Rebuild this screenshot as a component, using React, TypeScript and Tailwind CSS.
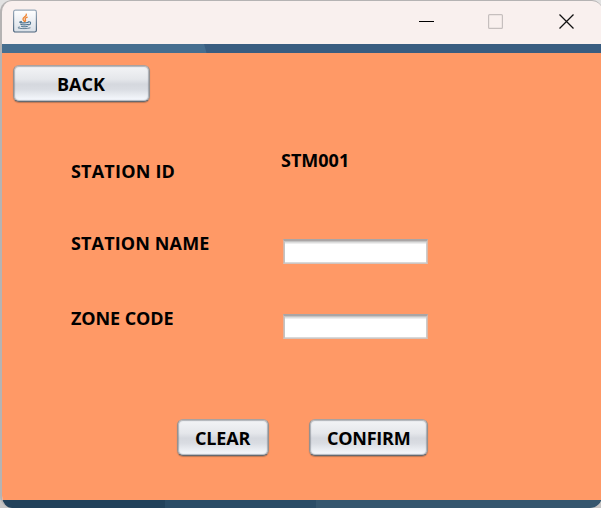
import React from "react";

const textStyle = "font-['Open_Sans','Noto_Sans',sans-serif] text-[18px] leading-[24px] font-bold text-black whitespace-nowrap";

function MetalButton({ label, size, spacing }: { label: string; size: string; spacing: string }) {
  return (
    <button
      className={`${size} ${textStyle} flex items-center rounded-[6px] border border-t-[#aaa19f] border-x-[#95908f] border-b-[#656970] bg-[linear-gradient(180deg,#f4f5f7_0%,#e5e7eb_38%,#d5d8de_52%,#d9dce2_65%,#f7faff_96%)] bg-origin-border shadow-[inset_0_0_1px_1px_rgba(110,115,125,0.5),0_1px_1px_rgba(90,70,60,0.4)]`}
    >
      <span className={spacing}>{label}</span>
    </button>
  );
}

function Field({ label }: { label: string }) {
  return (
    <input
      aria-label={label}
      className="block h-[25px] w-[145px] border border-t-2 border-t-[#aaa5a5] border-l-[#d9b5a5] border-r-[#d9b9aa] border-b-[#d0c4bf] bg-white shadow-[inset_0_1px_0_#c4c4c4,inset_1px_0_0_#c3c3c3,inset_-1px_0_0_#cccccc,inset_0_-1px_0_#d9d9d9,inset_0_2px_0_#dddddd,inset_0_3px_0_#eeeeee] outline-none"
    />
  );
}

function JavaIcon() {
  return (
    <svg className="h-6 w-6" viewBox="0 0 24 24" fill="none">
      <defs>
        <linearGradient id="tile" x1="0" y1="0" x2="0" y2="1">
          <stop stopColor="#ffffff" />
          <stop offset="1" stopColor="#d9dfe7" />
        </linearGradient>
        <linearGradient id="edge" x1="0" y1="0" x2="0" y2="1">
          <stop stopColor="#9aaaba" />
          <stop offset="1" stopColor="#4b647d" />
        </linearGradient>
      </defs>
      <rect x=".6" y="1.2" width="22.8" height="21.8" rx="1.8" fill="url(#tile)" stroke="url(#edge)" strokeWidth="1.2" />
      <g transform="translate(0 1)">
        <path d="M13.3 4.2c.8 2.2-3.6 2.8-3.3 5 .1.9 1.1 1.4 1.5 2.3M14.2 7.2c-2 .7-2.5 1.5-1.8 2.5.5.7.3 1.2-.5 2" stroke="#ef812c" strokeWidth="1.3" strokeLinecap="round" />
        <path d="M8.5 11.6c-2 .3-2.5.8-.5 1.1 2.3.3 5.2.2 7.4-.4M7.7 14.2c2.2.8 5.3.7 7.5 0M8.4 16.2c1.9.7 4.3.6 6 0M15.2 11.9c3.2-.8 3.1 2.6.4 3.1" stroke="#507590" strokeWidth="1.1" strokeLinecap="round" />
        <path d="M6.5 17c-2.1.4-2.1 1 0 1.3 3.2.5 7.7.4 10.6-.4" stroke="#668397" strokeWidth="1" strokeLinecap="round" />
      </g>
    </svg>
  );
}

export default function App() {
  return (
    <div className="h-[508px] w-[601px] overflow-hidden bg-[linear-gradient(180deg,#e2e2e2_0_50%,#c6c4c3_50%)]">
      <div className="flex h-[508px] w-[602px] flex-col overflow-hidden rounded-[12px] rounded-tr-[10px] border-t border-l-2 border-[#b5b3b3] bg-[#f9f0ee]">
        <header className="flex h-[43px] shrink-0 justify-between pt-2 pl-[11px]">
          <JavaIcon />
          <svg className="h-6 w-[183px]" viewBox="0 0 183 24" fill="none">
            <path d="M0 12.5h15" stroke="#000" />
            <rect x="69.6" y="5.6" width="13.8" height="13.8" rx="1" stroke="#c6bfbe" strokeWidth="1.2" />
            <path d="m140.5 5.5 14 14m0-14-14 14" stroke="#111" strokeWidth="1.3" />
          </svg>
        </header>
        <div className="h-[9px] shrink-0 bg-[linear-gradient(75deg,#466e8f_0_197px,#395d80_198px)]" />
        <main className="h-[447px] shrink-0 bg-[#ff9966] pt-3 pl-[11px]">
          <MetalButton label="BACK" size="h-[37px] w-[137px] pl-[43px]" spacing="tracking-[0px]" />
          <div className="mt-[46px] ml-[58px] grid w-fit grid-cols-[210px_150px]">
            <div className={`${textStyle} h-[81px] pt-[11px]`}><span className="tracking-[0.2px]">STATION ID</span></div>
            <div className={textStyle}><span className="tracking-[0px]">STM001</span></div>
            <div className={`${textStyle} h-[75px] pt-[2px]`}><span className="tracking-[0.13px]">STATION NAME</span></div>
            <div className="pt-[10px] pl-[2px]"><Field label="Station name" /></div>
            <div className={`${textStyle} pt-[2px]`}><span className="tracking-[-0.1px]">ZONE CODE</span></div>
            <div className="pt-[10px] pl-[2px]"><Field label="Zone code" /></div>
          </div>
          <div className="mt-[80px] ml-[164px] flex gap-[40px]">
            <MetalButton label="CLEAR" size="h-[37px] w-[92px] pl-[17px]" spacing="tracking-[-0.15px]" />
            <MetalButton label="CONFIRM" size="h-[37px] w-[119px] pl-[17px]" spacing="tracking-[-0.25px]" />
          </div>
        </main>
        <div className="h-2 shrink-0 bg-[linear-gradient(90deg,#22425b_0_163px,#2a4c66_163px_314px,#35566e_314px)]" />
      </div>
    </div>
  );
}
